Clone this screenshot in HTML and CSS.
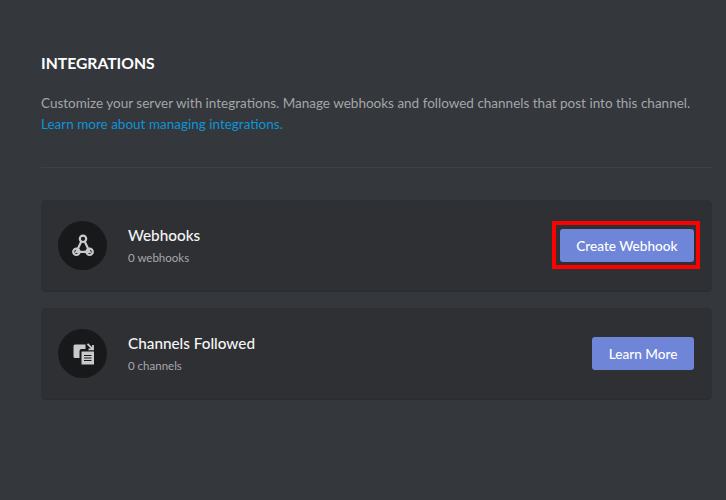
FILE: index.html
```html
<!DOCTYPE html>
<html lang="en">
<head>
  <meta charset="UTF-8">
  <title>Integrations</title>
  <link rel="stylesheet" href="styles.css">
</head>
<body>
  <div class="page">
    <h2 class="title">INTEGRATIONS</h2>
    <p class="desc">Customize your server with integrations. Manage webhooks and followed channels that post into this channel.<br>
      <a class="link" href="#">Learn more about managing integrations.</a></p>
    <div class="divider"></div>

    <div class="card">
      <div class="icon-circle">
        <svg width="24" height="24" viewBox="0 0 24 24" fill="none" stroke="#c9cacb" stroke-width="2.200">
          <circle cx="12" cy="4.800" r="3.200"/>
          <circle cx="5.400" cy="17.800" r="3.200"/>
          <circle cx="18.600" cy="17.800" r="3.200"/>
          <path d="M10.300 7.600 L5.400 17.800 H18.600 L13.700 7.600"/>
        </svg>
      </div>
      <div class="info">
        <div class="name">Webhooks</div>
        <div class="count">0 webhooks</div>
      </div>
      <button class="btn btn-marked">Create Webhook</button>
    </div>

    <div class="card">
      <div class="icon-circle">
        <svg width="24" height="24" viewBox="0 0 24 24">
          <path fill="#c9cacb" d="M2.500 4 Q2.500 2.500 4 2.500 H14.500 V7 H10.500 Q8.500 7 8.500 9 V16 H4 Q2.500 16 2.500 14.500 Z"/>
          <path fill="#c9cacb" d="M10.500 9.500 H23 V22.500 H10.500 Z"/>
          <path stroke="#18191b" stroke-width="1.200" d="M13 13.500 H20.500 M13 16 H20.500 M13 18.500 H20.500"/>
          <path fill="none" stroke="#c9cacb" stroke-width="1.800" d="M16.500 1.800 L21.500 6.800 M22 3 V7.300 H17.500"/>
        </svg>
      </div>
      <div class="info">
        <div class="name">Channels Followed</div>
        <div class="count">0 channels</div>
      </div>
      <button class="btn">Learn More</button>
    </div>
  </div>
</body>
</html>
```

FILE: styles.css
```css
body {
  margin: 0;
  background-color: #34373c;
  font-family: Lato, "Open Sans", sans-serif;
}
.page {
  padding: 53px 14px 0 41px;
}
.title {
  margin: 0;
  color: #fff;
  font-size: 15.700px;
  line-height: 20px;
  font-weight: 700;
}
.desc {
  margin: 20px 0 0;
  color: #a4a6a9;
  font-size: 13.500px;
  line-height: 21px;
  white-space: nowrap;
}
.link {
  color: #0f94d6;
  text-decoration: none;
}
.divider {
  height: 1px;
  margin: 32px 0;
  background-color: #3d4045;
}
.card {
  display: flex;
  align-items: center;
  height: 91px;
  box-sizing: border-box;
  margin-bottom: 17px;
  padding: 0 18px 0 17px;
  background-color: #2e3034;
  border-radius: 5px;
  box-shadow: 0 1px 0 #2a2c30;
}
.icon-circle {
  display: flex;
  justify-content: center;
  align-items: center;
  width: 49px;
  height: 49px;
  border-radius: 50%;
  background-color: #18191b;
}
.info {
  flex: 1;
  margin-left: 21px;
}
.name {
  color: #f4f5f5;
  font-size: 15.300px;
  line-height: 20px;
  font-weight: 500;
}
.count {
  margin-top: 5px;
  color: #a6a8ab;
  font-size: 11.500px;
  line-height: 16px;
}
.btn {
  position: relative;
  height: 33px;
  padding: 0 16.500px;
  border: none;
  border-radius: 3px;
  background-color: #6f85d8;
  color: #fff;
  font-family: inherit;
  font-size: 13.600px;
  font-weight: 500;
}
.btn-marked::after {
  content: "";
  position: absolute;
  top: -8px;
  right: -6px;
  bottom: -7px;
  left: -8px;
  border: 4px solid #f00;
}
```
